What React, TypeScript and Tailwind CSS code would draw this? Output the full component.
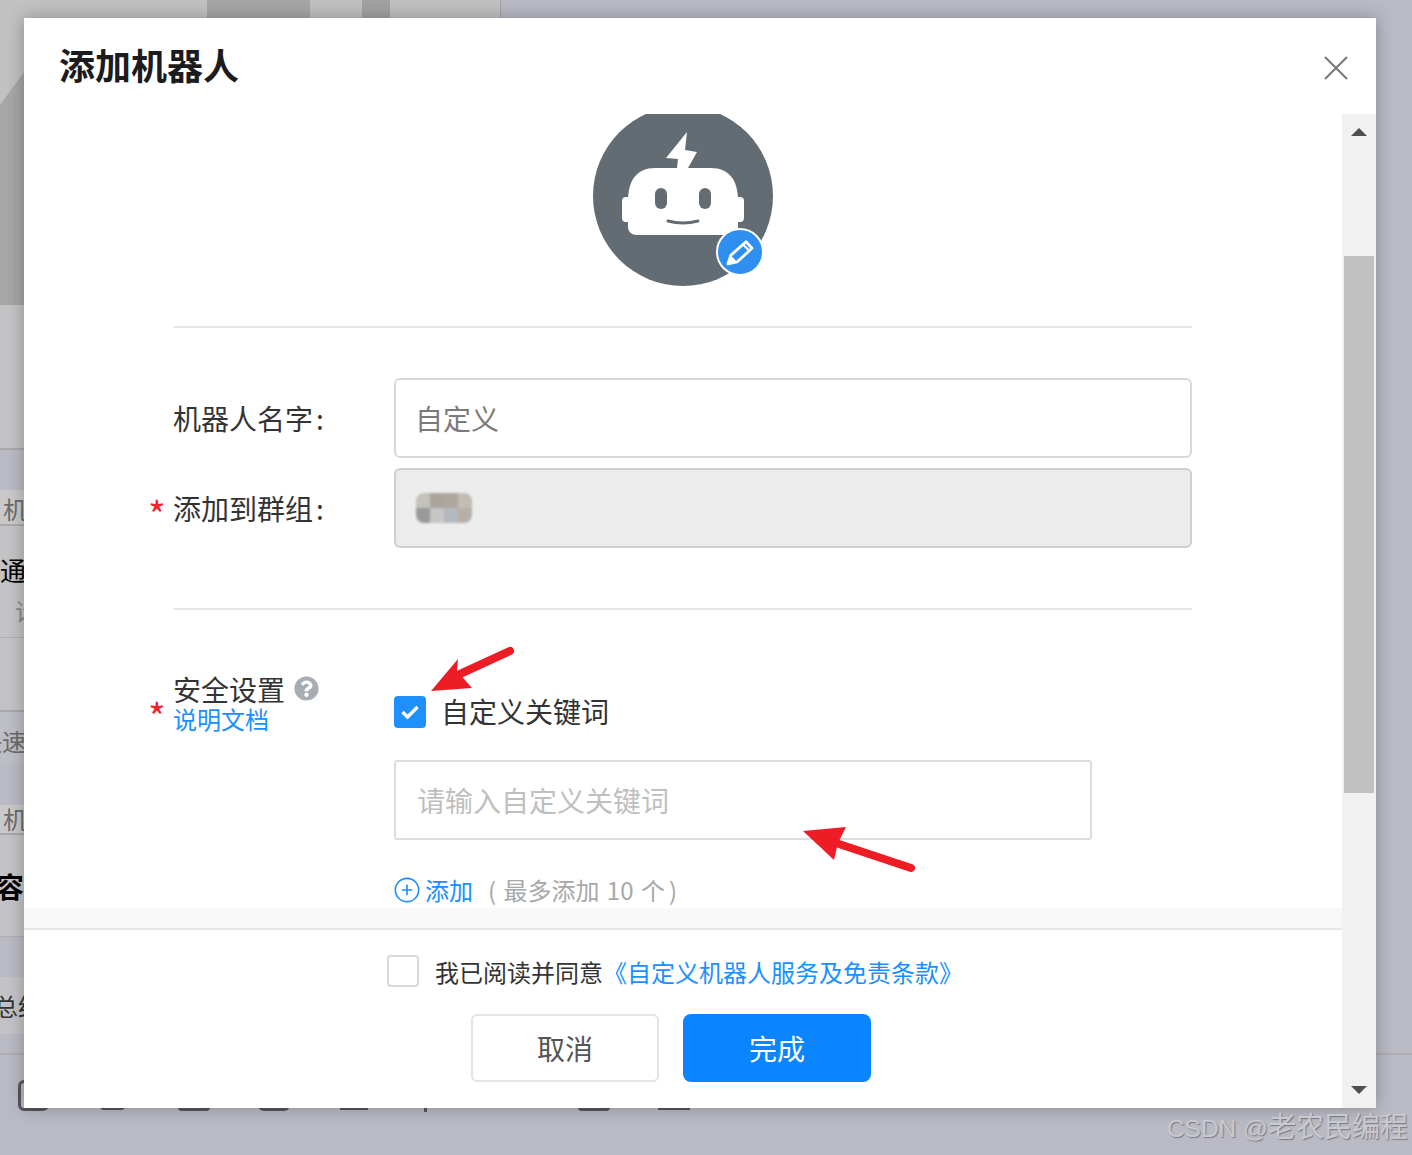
import { CirclePlus } from 'lucide-react';
import { FaQuestionCircle } from 'react-icons/fa';

const FONT = "font-['Noto_Sans_CJK_SC','Noto_Sans',sans-serif]";
const MOSAIC = ['#c4c2bb', '#aaa59c', '#aea89f', '#c2bdb2', '#9a9a98', '#c6c6c6', '#b4b9bf', '#b8b0a8'];

function BackdropText({ text, className }: { text: string; className: string }) {
  return <div className={`overflow-hidden whitespace-nowrap leading-none ${className}`}>{text}</div>;
}

function Backdrop() {
  return (
    <div className="flex h-full flex-col">
      <div className="flex h-[1053px]">
        {/* page behind the dialog, only its left edge shows */}
        <div className="flex w-[501px] flex-col border-r-2 border-[#a4a4aa] bg-[#c3c3c5]">
          <svg width="500" height="305" viewBox="0 0 500 305" className="shrink-0">
            <rect width="500" height="305" fill="#c1c1c1" />
            <polygon points="0,105 24,72 24,305 0,305" fill="#a6a6a6" />
            <rect x="207" width="103" height="18" fill="#a6a6a6" />
            <rect x="362" width="28" height="18" fill="#a2a2a2" />
          </svg>
          <div className="h-[145px] shrink-0 border-b-2 border-[#a9a9ad]" />
          <div className="h-[40px] shrink-0 bg-[#b9bac4]" />
          <BackdropText text="机" className="flex h-[36px] shrink-0 items-center border-b-2 border-[#a9a9ad] bg-[#c9c9ca] pl-[3px] pt-[4px] text-[24px] text-[#6b6b6b]" />
          <div className="h-[112px] shrink-0 border-b border-[#aeaeb0] pt-[31px]">
            <BackdropText text="通知" className="h-[30px] w-[24px] text-[26px] text-black" />
            <BackdropText text="请" className="mt-[12px] pl-[15px] text-[24px] text-[#888]" />
          </div>
          <div className="h-[74px] shrink-0 border-b-2 border-[#a9a9ad]" />
          <BackdropText text="快速" className="-ml-[22px] flex h-[52px] shrink-0 items-center bg-[#bebfc6] pt-[5px] text-[24px] text-[#6b6b6b]" />
          <div className="h-[41px] shrink-0 bg-[#b9bac4]" />
          <BackdropText text="机" className="flex h-[30px] shrink-0 items-center border-b-2 border-[#a9a9ad] bg-[#c9c9ca] pl-[3px] text-[24px] text-[#6b6b6b]" />
          <div className="flex h-[102px] shrink-0 items-center border-b border-[#aeaeb0]">
            <span className="-ml-[4px] text-[28px] font-bold leading-none text-black">容</span>
          </div>
          <div className="h-[40px] shrink-0 bg-[#b9bac4]" />
          <BackdropText text="总结" className="-ml-[6px] flex h-[57px] shrink-0 items-center bg-[#c3c3c7] text-[24px] text-[#333]" />
          <div className="min-h-0 flex-1 bg-[#b9bac4]" />
        </div>
      </div>
      {/* bottom toolbar, mostly under the dialog */}
      <div className="flex h-[102px] border-t-2 border-[#aeaeb4] pl-[18px] pt-[25px]">
        <div className="h-[31px] w-[31px] rounded-[6px] border-[3px] border-[#55565c]" />
        <div className="ml-[51px] h-[30px] w-[25px] rounded-[4px] border-b-[3px] border-[#55565c]" />
        <div className="ml-[53px] h-[31px] w-[32px] rounded-[4px] border-b-[3px] border-[#55565c]" />
        <div className="ml-[48px] h-[31px] w-[32px] rounded-[6px] border-b-[4px] border-[#55565c]" />
        <div className="ml-[50px] h-[30px] w-[28px] border-b-[2px] border-[#55565c]" />
        <div className="ml-[56px] h-[32px] w-[3px] bg-[#55565c]" />
        <div className="ml-[151px] h-[31px] w-[32px] rounded-[4px] border-b-[3px] border-[#55565c]" />
        <div className="ml-[48px] h-[30px] w-[32px] border-b-[2px] border-[#55565c]" />
      </div>
    </div>
  );
}

function RobotAvatar() {
  return (
    <div className="relative -mt-[8px] h-[180px] w-[180px]">
      <svg width="180" height="180" viewBox="0 0 180 180">
        <circle cx="90" cy="90" r="90" fill="#636c73" />
        <polygon points="94,26 73,52 85,53 84,62 95,62 104,46 92,44" fill="#fff" />
        <path
          d="M35 121V95C35 74 44 62 62 62H118C136 62 145 74 145 95V121C145 126 141 129 136 129H44C39 129 35 126 35 121Z"
          fill="#fff"
        />
        <rect x="29" y="91" width="10" height="25" rx="4" fill="#fff" />
        <rect x="141" y="91" width="10" height="25" rx="4" fill="#fff" />
        <rect x="62" y="82" width="12" height="21" rx="6" fill="#636c73" />
        <rect x="106" y="82" width="12" height="21" rx="6" fill="#636c73" />
        <path d="M75 115Q90 119 105 115" fill="none" stroke="#636c73" strokeWidth="3" strokeLinecap="round" />
      </svg>
      <div className="absolute left-[123px] top-[122px] h-[48px] w-[48px] rounded-full border-2 border-white bg-[#2f8ff0]">
        <svg width="44" height="44" viewBox="2 2 44 44">
          <path d="M12 36L14.8 27.3L30 13.7L36 20.3L21 34Z" fill="none" stroke="#fff" strokeWidth="2.8" strokeLinejoin="round" />
          <polygon points="12,36 14.8,27.3 21,34" fill="#fff" />
          <path d="M27 16.5L33.5 23" stroke="#fff" strokeWidth="2" />
        </svg>
      </div>
    </div>
  );
}

function Asterisk({ className }: { className: string }) {
  return <span className={`-ml-[26px] mr-[2px] w-[24px] shrink-0 text-[38px] leading-none text-[#f5222d] ${className}`}>*</span>;
}

function Scrollbar() {
  return (
    <div className="flex w-[34px] shrink-0 flex-col items-center bg-[#f1f1f1]">
      <svg width="16" height="8" viewBox="0 0 16 8" className="mt-[14px] shrink-0">
        <polygon points="8,0 16,8 0,8" fill="#4f4f4f" />
      </svg>
      <div className="mt-[120px] h-[537px] w-[30px] shrink-0 bg-[#c1c1c1]" />
      <svg width="16" height="8" viewBox="0 0 16 8" className="mt-auto mb-[14px] shrink-0">
        <polygon points="0,0 16,0 8,8" fill="#4f4f4f" />
      </svg>
    </div>
  );
}

function Dialog() {
  return (
    <div className="absolute left-[24px] top-[18px] flex h-[1090px] w-[1352px] flex-col bg-white shadow-[0_0_16px_rgba(0,0,0,0.28)]">
      <div className="flex h-[96px] shrink-0 items-start justify-between pl-[35px] pr-[28px]">
        <h1 className="mt-[21px] text-[36px] font-bold leading-[50px] text-[#1c1c1e]">添加机器人</h1>
        <svg width="24" height="24" viewBox="0 0 24 24" className="mt-[38px]">
          <path d="M1 1L23 23M23 1L1 23" stroke="#777" strokeWidth="2" fill="none" />
        </svg>
      </div>

      <div className="flex min-h-0 flex-1">
        <div className="flex min-w-0 flex-1 flex-col">
          {/* scrolling form */}
          <div className="h-[794px] shrink-0 overflow-hidden px-[150px]">
            <div className="flex justify-center">
              <RobotAvatar />
            </div>
            <div className="mt-[40px] h-[2px] bg-[#e4e4e4]" />

            <div className="mt-[50px] flex items-center">
              <div className="w-[220px] shrink-0 -translate-x-px text-[28px] leading-[40px] text-[#333]">
                机器人名字<span className="ml-[3px]">:</span>
              </div>
              <div className="flex h-[80px] flex-1 items-center rounded-[6px] border-2 border-[#d9d9d9] pl-[19px] text-[28px] text-[#7b7b7b]">
                自定义
              </div>
            </div>

            <div className="mt-[10px] flex items-center">
              <Asterisk className="mt-[12px]" />
              <div className="w-[220px] shrink-0 -translate-x-px text-[28px] leading-[40px] text-[#333]">
                添加到群组<span className="ml-[3px]">:</span>
              </div>
              <div className="flex h-[80px] flex-1 items-center rounded-[6px] border-2 border-[#cfcfcf] bg-[#ececec] pl-[20px]">
                <div className="grid h-[30px] w-[56px] grid-cols-4 overflow-hidden rounded-[8px] blur-[1.2px]">
                  {MOSAIC.map((color, i) => (
                    <div key={i} style={{ backgroundColor: color }} />
                  ))}
                </div>
              </div>
            </div>

            <div className="mt-[60px] h-[2px] bg-[#e4e4e4]" />

            <div className="mt-[63px] flex items-start">
              <Asterisk className="mt-[24px]" />
              <div className="w-[220px] shrink-0 -translate-x-px">
                <div className="flex h-[32px] items-center text-[28px] leading-[32px] text-[#333]">
                  安全设置
                  <FaQuestionCircle size={25} color="#a8adb3" className="ml-[9px] -mt-[2px]" />
                </div>
                <div className="h-[28px] text-[24px] leading-[28px] text-[#1890ff]">说明文档</div>
              </div>
              <div className="flex-1 pt-[23px]">
                <div className="flex h-[32px] items-center">
                  <div className="flex h-[32px] w-[32px] items-center justify-center rounded-[4px] bg-[#1f8ffb]">
                    <svg width="20" height="16" viewBox="0 0 20 16">
                      <path d="M2.5 8L7.5 13L17.5 3" fill="none" stroke="#fff" strokeWidth="3.4" />
                    </svg>
                  </div>
                  <span className="ml-[15px] -mt-[2px] text-[28px] leading-[32px] text-[#333]">自定义关键词</span>
                </div>
                <div className="mt-[32px] flex h-[80px] w-[698px] items-center rounded-[3px] border-2 border-[#dddddd] pl-[21px] text-[28px] text-[#bfbfbf]">
                  请输入自定义关键词
                </div>
                <div className="mt-[34px] flex h-[32px] items-center text-[24px] leading-[32px]">
                  <CirclePlus size={28} color="#1f8ffb" strokeWidth={1.4} className="-ml-[1px]" />
                  <span className="ml-[4px] text-[#1890ff]">添加</span>
                  <span className="ml-[15px] text-[#a8a8a8] [word-spacing:2px]">
                    ( 最多添加 10 个<span className="ml-[4px]">)</span>
                  </span>
                </div>
              </div>
            </div>
          </div>

          <div className="h-[20px] shrink-0 bg-[#f8f8f8]" />
          <div className="h-[2px] shrink-0 bg-[#e6e6e6]" />

          {/* agreement and actions */}
          <div className="flex flex-1 flex-col items-center pr-[24px] pt-[25px]">
            <div className="ml-[8px] flex h-[32px] items-center">
              <div className="h-[32px] w-[32px] rounded-[4px] border-2 border-[#d9d9d9]" />
              <span className="ml-[16px] mt-[2px] text-[24px] leading-[32px] text-[#333]">我已阅读并同意</span>
              <span className="mt-[2px] text-[24px] leading-[32px] text-[#1890ff]">《自定义机器人服务及免责条款》</span>
            </div>
            <div className="mt-[27px] flex gap-[24px]">
              <div className="flex h-[68px] w-[188px] items-center justify-center rounded-[6px] border-2 border-[#e4e4e4] text-[28px] text-[#555]">
                取消
              </div>
              <div className="flex h-[68px] w-[188px] items-center justify-center rounded-[8px] bg-[#0a84ff] text-[28px] text-white">
                完成
              </div>
            </div>
          </div>
        </div>
        <Scrollbar />
      </div>
    </div>
  );
}

export default function App() {
  return (
    <div className={`relative h-[1155px] w-[1412px] overflow-hidden bg-[#b9bac4] ${FONT}`}>
      <Backdrop />
      <Dialog />

      {/* annotation arrows pasted on the screenshot */}
      <svg width="1412" height="1155" viewBox="0 0 1412 1155" className="pointer-events-none absolute left-0 top-0">
        <polygon points="431,691 458,659 457,671 472,688" fill="#ee1c25" />
        <line x1="460" y1="674" x2="510" y2="651" stroke="#ee1c25" strokeWidth="8" strokeLinecap="round" />
        <polygon points="803,831 846,827 838,843 834,860" fill="#ee1c25" />
        <line x1="836" y1="843" x2="911" y2="868" stroke="#ee1c25" strokeWidth="8" strokeLinecap="round" />
      </svg>

      <div className="absolute bottom-[8px] right-[4px] whitespace-nowrap text-[28px] leading-[36px] text-[#c9cacf] [font-family:'Liberation_Sans','Noto_Sans_CJK_SC',sans-serif] [text-shadow:1px_1px_1px_rgba(70,70,80,0.55)]">
        <span className="text-[24.5px]">CSDN @</span>老农民编程
      </div>
    </div>
  );
}
